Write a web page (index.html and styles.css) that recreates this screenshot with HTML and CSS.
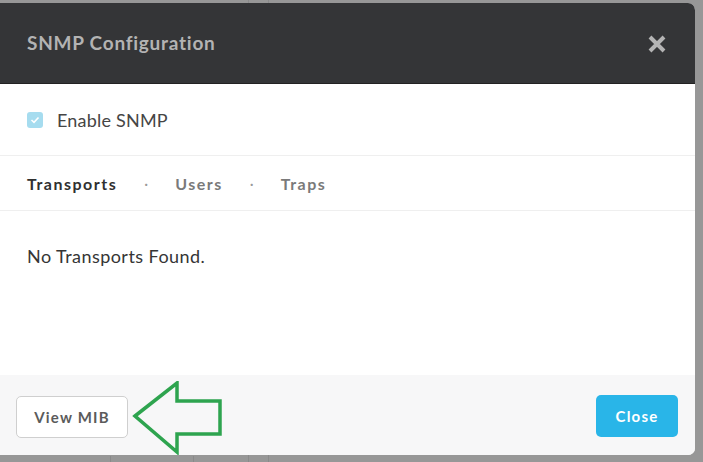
FILE: index.html
```html
<!DOCTYPE html>
<html>
<head>
<meta charset="utf-8">
<link rel="stylesheet" href="styles.css">
</head>
<body>
<div class="backdrop">
  <div class="modal">
    <div class="modal-header">
      <h1 class="modal-title">SNMP Configuration</h1>
      <svg class="close-x" width="20" height="20" viewBox="0 0 20 20"><path d="M3 3 L17 17 M17 3 L3 17" stroke="#b4b4b4" stroke-width="4" stroke-linecap="butt"/></svg>
    </div>
    <div class="enable-row">
      <span class="checkbox"><svg width="10" height="8" viewBox="0 0 10 8"><path d="M1.5 4 L4 6.3 L8.5 1.5" fill="none" stroke="#fff" stroke-width="1.6"/></svg></span>
      <span class="enable-label">Enable SNMP</span>
    </div>
    <div class="tabs">
      <span class="tab active">Transports</span>
      <span class="dot">·</span>
      <span class="tab">Users</span>
      <span class="dot">·</span>
      <span class="tab">Traps</span>
    </div>
    <div class="content">
      <p class="empty">No Transports Found.</p>
    </div>
    <div class="footer">
      <button class="btn btn-default">View MIB</button>
      <svg class="arrow" width="92" height="74" viewBox="0 0 92 74"><path d="M3 35 L45 2 L45 20 L88 20 L88 53 L45 53 L45 71 Z" fill="none" stroke="#2ea44f" stroke-width="3.5" stroke-linejoin="miter"/></svg>
      <button class="btn btn-primary">Close</button>
    </div>
  </div>
</div>
</body>
</html>
```
FILE: styles.css
```css
html, body {
  margin: 0;
  padding: 0;
}
body {
  width: 703px;
  height: 462px;
  overflow: hidden;
  background: #979797;
  font-family: "Lato", "Open Sans", sans-serif;
}
.backdrop {
  height: 462px;
  background:
    linear-gradient(#8a8a8a, #8a8a8a) 110px 456px / 1px 6px no-repeat,
    linear-gradient(#8a8a8a, #8a8a8a) 193px 456px / 1px 6px no-repeat,
    linear-gradient(#8a8a8a, #8a8a8a) 248px 0 / 1px 462px no-repeat,
    linear-gradient(#8a8a8a, #8a8a8a) 268px 0 / 1px 462px no-repeat,
    #979797;
  padding-top: 3px;
  box-sizing: border-box;
}
.modal {
  width: 695px;
  height: 452px;
  background: #fff;
  border-radius: 0 7px 7px 0;
  overflow: hidden;
  display: flex;
  flex-direction: column;
}
.modal-header {
  height: 81px;
  flex: none;
  background: #343537;
  display: flex;
  align-items: center;
  justify-content: space-between;
  padding: 0 27px;
  box-sizing: border-box;
  border-bottom: 1px solid #222;
}
.modal-title {
  margin: 0;
  font-size: 19px;
  font-weight: 700;
  color: #b3b3b3;
  letter-spacing: 0.75px;
  position: relative;
  top: -1px;
}
.close-x {
  margin-right: 1px;
  position: relative;
  top: 1px;
}
.enable-row {
  height: 72px;
  flex: none;
  display: flex;
  align-items: center;
  padding: 0 27px;
  border-bottom: 1px solid #efefef;
  box-sizing: border-box;
}
.checkbox {
  width: 16px;
  height: 16px;
  border-radius: 3px;
  background: #a6dcef;
  display: flex;
  align-items: center;
  justify-content: center;
  margin-right: 14px;
}
.enable-label {
  font-size: 18px;
  color: #454545;
  letter-spacing: 0.2px;
}
.tabs {
  height: 55px;
  flex: none;
  display: flex;
  align-items: center;
  padding: 0 27px;
  border-bottom: 1px solid #efefef;
  box-sizing: border-box;
}
.tab {
  font-size: 16px;
  font-weight: 700;
  letter-spacing: 1.5px;
  color: #7a7a7a;
}
.tab.active {
  color: #303030;
}
.dot {
  color: #999;
  font-size: 15px;
  margin: 0 27px;
}
.content {
  flex: 1;
  padding: 0 27px;
}
.empty {
  margin: 34px 0 0;
  font-size: 18px;
  color: #353535;
  letter-spacing: 0.45px;
}
.footer {
  height: 80px;
  flex: none;
  background: #f7f7f8;
  display: flex;
  align-items: center;
  padding: 0 17px 0 16px;
  box-sizing: border-box;
}
.btn {
  font-family: inherit;
  font-size: 15px;
  font-weight: 700;
  letter-spacing: 1.2px;
  border-radius: 5px;
  height: 42px;
  cursor: pointer;
}
.btn-default {
  width: 112px;
  background: #fff;
  border: 1px solid #cfcfcf;
  color: #5b5b5b;
  margin-top: 4px;
}
.arrow {
  margin-left: 4px;
  margin-top: 5px;
}
.btn-primary {
  margin-left: auto;
  width: 82px;
  background: #29b5e8;
  border: none;
  color: #fff;
  margin-top: 2px;
}
```
